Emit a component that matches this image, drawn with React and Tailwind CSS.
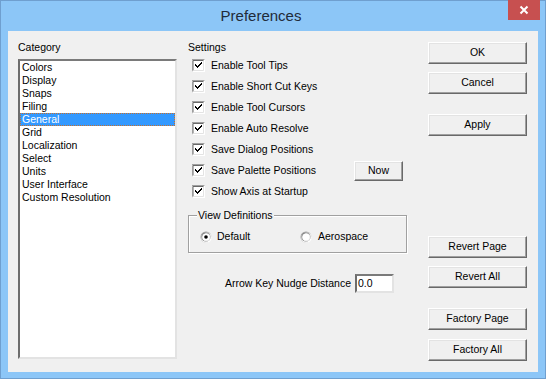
import React from 'react';

const CATEGORIES = ['Colors', 'Display', 'Snaps', 'Filing', 'General', 'Grid', 'Localization', 'Select', 'Units', 'User Interface', 'Custom Resolution'];

const SETTINGS = [
  'Enable Tool Tips',
  'Enable Short Cut Keys',
  'Enable Tool Cursors',
  'Enable Auto Resolve',
  'Save Dialog Positions',
  'Save Palette Positions',
  'Show Axis at Startup',
];

const FONT = { fontFamily: "'Liberation Sans', Arial, sans-serif" };

function Button({ children, className = '' }) {
  return (
    <div
      className={`flex items-center justify-center bg-[#f0f0f0] text-[10.5px] text-black border border-t-white border-l-white border-r-[#696969] border-b-[#696969] shadow-[inset_-1px_-1px_0_#a0a0a0,inset_1px_1px_0_#e3e3e3] ${className}`}
    >
      {children}
    </div>
  );
}

function CheckBox() {
  return (
    <svg width="13" height="13" viewBox="0 0 13 13" className="shrink-0">
      <rect x="0" y="0" width="13" height="13" fill="#ffffff" />
      <path d="M0 12.5V0.5H12.5" stroke="#a0a0a0" fill="none" />
      <path d="M1 11.5V1.5H11.5" stroke="#696969" fill="none" />
      <path d="M1.5 12.5H12.5V1" stroke="#ffffff" fill="none" />
      <path d="M2 11.5H11.5V2" stroke="#e3e3e3" fill="none" />
      <path d="M3 5v2h1v1h1v1h1V8h1V7h1V6h1V5h1V3H9v1H8v1H7v1H6v1H5V6H4V5z" fill="#000" />
    </svg>
  );
}

function Radio({ checked }) {
  return (
    <svg width="12" height="12" viewBox="0 0 12 12" className="shrink-0">
      <circle cx="6" cy="6" r="5.5" fill="#a0a0a0" />
      <circle cx="6.5" cy="6.5" r="5.3" fill="#ffffff" />
      <circle cx="6" cy="6" r="4.5" fill="#696969" />
      <circle cx="6.4" cy="6.4" r="4.2" fill="#e3e3e3" />
      <circle cx="6" cy="6" r="3.6" fill="#ffffff" />
      {checked && <circle cx="6" cy="6" r="1.8" fill="#000" />}
    </svg>
  );
}

export default function App() {
  return (
    <div className="w-[546px] h-[379px] bg-[#8cc6f7] border border-[#6f9fcf] flex flex-col" style={FONT}>
      <div className="h-[30px] flex items-start shrink-0">
        <div className="flex-1 pl-[13px] h-[30px] flex items-center justify-center text-[15px] text-[#1f2b3a]">Preferences</div>
        <div className="w-[32px] h-[20px] mr-[5px] -mt-[1px] bg-[#c75050] flex items-center justify-center">
          <svg width="10" height="10" viewBox="0 0 10 10">
            <path d="M1.5 1.5L8.5 8.5M8.5 1.5L1.5 8.5" stroke="#fff" strokeWidth="2" />
          </svg>
        </div>
      </div>

      <div className="mx-[7px] mb-[6px] flex-1 bg-[#f0f0f0] flex pt-[10px] pl-[10px] text-[10.5px] text-black">
        <div className="w-[159px] flex flex-col">
          <div className="h-[13px] leading-[13px]">Category</div>
          <div className="mt-[5px] h-[300px] bg-white border-2 border-t-[#7a7a7a] border-l-[#6d6d6d] border-r-[#e3e3e3] border-b-[#e3e3e3]">
            {CATEGORIES.map((c) =>
              c === 'General' ? (
                <div key={c} className="h-[13px] leading-[11px] pl-[1px] bg-[#3399ff] text-white border border-dotted border-[#c8702c]">
                  {c}
                </div>
              ) : (
                <div key={c} className="h-[13px] leading-[13px] pl-[2px]">{c}</div>
              )
            )}
          </div>
        </div>

        <div className="w-[220px] ml-[10px] flex flex-col">
          <div className="h-[13px] leading-[13px] pl-[1px]">Settings</div>
          <div className="mt-[1px] flex flex-col">
            {SETTINGS.map((s) => (
              <div key={s} className="h-[21px] flex items-center pl-[5px] pr-[4px]">
                <CheckBox />
                <span className="ml-[6px]">{s}</span>
                {s === 'Save Palette Positions' && <Button className="ml-auto w-[49px] h-[20px]">Now</Button>}
              </div>
            ))}
          </div>

          <div className="mt-[13px] ml-[1px] h-[38px] border border-[#a0a0a0] shadow-[inset_1px_1px_0_#ffffff,1px_1px_0_#ffffff] flex flex-col">
            <div className="-mt-[7px] ml-[8px] px-[1px] w-fit bg-[#f0f0f0] h-[13px] leading-[13px]">View Definitions</div>
            <div className="mt-[8px] h-[13px] flex items-center pl-[11px]">
              <div className="w-[100px] flex items-center">
                <Radio checked />
                <span className="ml-[5px]">Default</span>
              </div>
              <div className="flex items-center">
                <Radio />
                <span className="ml-[6px]">Aerospace</span>
              </div>
            </div>
          </div>

          <div className="mt-[21px] flex items-center justify-end pr-[13px]">
            <span>Arrow Key Nudge Distance</span>
            <div className="ml-[4px] w-[39px] h-[19px] bg-white border-2 border-t-[#7a7a7a] border-l-[#6d6d6d] border-r-[#e3e3e3] border-b-[#e3e3e3] leading-[15px] pl-[1px]">
              0.0
            </div>
          </div>
        </div>

        <div className="w-[99px] ml-[21px] flex flex-col">
          <Button className="mt-[1px] h-[22px]">OK</Button>
          <Button className="mt-[8px] h-[22px]">Cancel</Button>
          <Button className="mt-[20px] h-[22px]">Apply</Button>
          <Button className="mt-[100px] h-[22px]">Revert Page</Button>
          <Button className="mt-[8px] h-[22px]">Revert All</Button>
          <Button className="mt-[20px] h-[22px]">Factory Page</Button>
          <Button className="mt-[9px] h-[22px]">Factory All</Button>
        </div>
      </div>
    </div>
  );
}
